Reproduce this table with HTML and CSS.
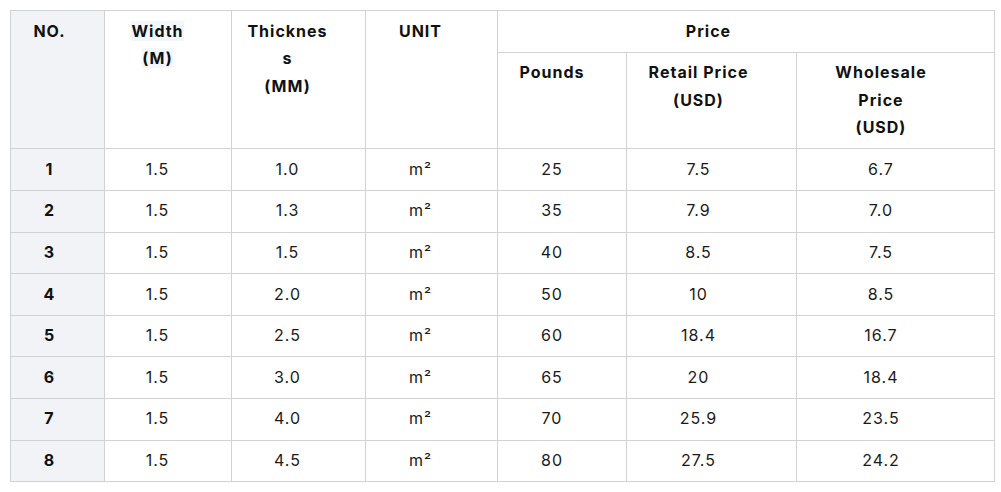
FILE: index.html
```html
<!DOCTYPE html>
<html>
<head>
<meta charset="utf-8">
<link rel="stylesheet" href="styles.css">
</head>
<body>
<table class="spec">
  <colgroup>
    <col class="c-no"><col class="c-w"><col class="c-t"><col class="c-u"><col class="c-p"><col class="c-r"><col class="c-ws">
  </colgroup>
  <thead>
    <tr>
      <th rowspan="2" class="first k1">NO.</th>
      <th rowspan="2" class="k2"><span class="hl">Width<br>(M)</span></th>
      <th rowspan="2" class="k3">Thicknes<br>s<br>(MM)</th>
      <th rowspan="2" class="k4">UNIT</th>
      <th colspan="3" class="kspan">Price</th>
    </tr>
    <tr>
      <th class="k5">Pounds</th>
      <th class="k6">Retail Price<br>(USD)</th>
      <th class="k7">Wholesale<br>Price<br>(USD)</th>
    </tr>
  </thead>
  <tbody>
    <tr><th class="first">1</th><td>1.5</td><td>1.0</td><td>m²</td><td>25</td><td>7.5</td><td>6.7</td></tr>
    <tr><th class="first">2</th><td>1.5</td><td>1.3</td><td>m²</td><td>35</td><td>7.9</td><td>7.0</td></tr>
    <tr><th class="first">3</th><td>1.5</td><td>1.5</td><td>m²</td><td>40</td><td>8.5</td><td>7.5</td></tr>
    <tr><th class="first">4</th><td>1.5</td><td>2.0</td><td>m²</td><td>50</td><td>10</td><td>8.5</td></tr>
    <tr><th class="first">5</th><td>1.5</td><td>2.5</td><td>m²</td><td>60</td><td>18.4</td><td>16.7</td></tr>
    <tr><th class="first">6</th><td>1.5</td><td>3.0</td><td>m²</td><td>65</td><td>20</td><td>18.4</td></tr>
    <tr><th class="first">7</th><td>1.5</td><td>4.0</td><td>m²</td><td>70</td><td>25.9</td><td>23.5</td></tr>
    <tr><th class="first">8</th><td>1.5</td><td>4.5</td><td>m²</td><td>80</td><td>27.5</td><td>24.2</td></tr>
  </tbody>
</table>
</body>
</html>
```
FILE: styles.css
```css
html, body {
  margin: 0;
  padding: 0;
  background: #ffffff;
}
body {
  padding: 10px;
  font-family: Inter, "Liberation Sans", sans-serif;
  color: #1a1a1a;
}
.spec {
  border-collapse: collapse;
  table-layout: fixed;
  width: 984px;
  font-size: 16px;
  line-height: 27.6px;
  letter-spacing: 1px;
}
.c-no { width: 94px; }
.c-w { width: 127px; }
.c-t { width: 134px; }
.c-u { width: 132px; }
.c-p { width: 129px; }
.c-r { width: 170px; }
.c-ws { width: 198px; }
.spec th, .spec td {
  border: 1px solid #d2d2d4;
  padding: 6.5px 4px;
  text-align: center;
}
.spec thead th {
  vertical-align: top;
  font-weight: 700;
  color: #111;
}
.spec td {
  vertical-align: middle;
  font-weight: 400;
}
.spec tbody th {
  font-weight: 700;
  color: #111;
}
.spec .first {
  background: #f2f3f7;
}
.hl {
  background: #f1f7fc;
}

/* text sits left of centre in each column */
.spec thead .k1, .spec tbody tr > :nth-child(1) { padding-right: 20px; }
.spec thead .k2, .spec tbody tr > :nth-child(2) { padding-right: 25px; }
.spec thead .k3, .spec tbody tr > :nth-child(3) { padding-right: 26px; }
.spec thead .k4, .spec tbody tr > :nth-child(4) { padding-right: 26px; }
.spec thead .k5, .spec tbody tr > :nth-child(5) { padding-right: 24px; }
.spec thead .k6, .spec tbody tr > :nth-child(6) { padding-right: 30px; }
.spec thead .k7, .spec tbody tr > :nth-child(7) { padding-right: 33px; }
.spec thead .kspan { padding-right: 79px; }
```
